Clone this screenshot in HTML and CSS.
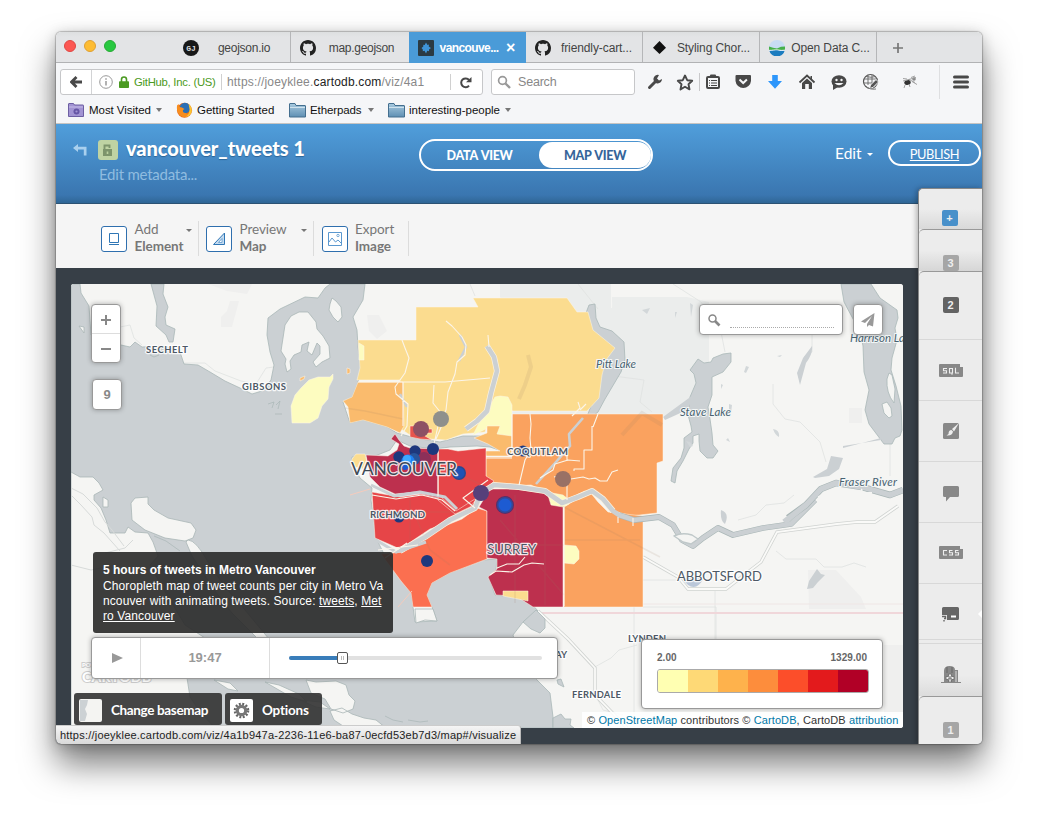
FILE: index.html
```html
<!DOCTYPE html>
<html lang="en">
<head>
<meta charset="utf-8">
<title>vancouver_tweets 1</title>
<link rel="stylesheet" href="styles.css">
</head>
<body>
<div class="window">
  <div class="tabbar">
    <div class="lights"><i class="red"></i><i class="amber"></i><i class="green"></i></div>
    <div class="tab first"><svg width="16" height="16" viewBox="0 0 16 16"><circle cx="8" cy="8" r="8" fill="#181818"/><text x="8" y="11" text-anchor="middle" class="gj">GJ</text></svg><span>geojson.io</span></div>
    <div class="tab"><svg width="16" height="16" viewBox="0 0 16 16"><use href="#octo"/></svg><span>map.geojson</span></div>
    <div class="tab active"><svg width="16" height="16" viewBox="0 0 16 16"><rect width="16" height="16" rx="1" fill="#2b3a42"/><path d="M8 2.500l1.500 2.500 1.500-.5-.3 2L13 8l-2 1.500v1.700l-1.700-.4L8 13.500l-1.500-2.700-1.700.4V9.500L3.500 8l1.800-1.500V4.800l1.400.3z" fill="#3f94d6"/></svg><span>vancouve...</span><b>×</b></div>
    <div class="tab"><svg width="16" height="16" viewBox="0 0 16 16"><use href="#octo"/></svg><span>friendly-cart...</span></div>
    <div class="tab"><svg width="16" height="16" viewBox="0 0 16 16"><path d="M7.500 1l6.500 6.800-6.500 6.200L1 7.800z" fill="#111"/></svg><span>Styling Chor...</span></div>
    <div class="tab"><svg width="16" height="16" viewBox="0 0 16 16"><circle cx="8" cy="8" r="8" fill="#c8dcf4"/><path d="M0 6.500l4 1.200 4 .8 4-1.800 4-.2V10H0z" fill="#46b04a"/><path d="M.3 10.500c3 .5 6-1 9-.2 3 .7 4 .7 6.400.2a8 8 0 0 1-15.400 0z" fill="#1b7cbf"/><path d="M0 10.300c3 .4 6-1 9-.4 3 .6 4 .6 7 .2" fill="none" stroke="#fff" stroke-width=".8"/></svg><span>Open Data C...</span></div>
    <div class="newtab"><svg width="12" height="12" viewBox="0 0 12 12"><path d="M6 1v10M1 6h10" stroke="#777" stroke-width="1.700"/></svg></div>
  </div>

  <div class="navbar">
    <div class="urlbox">
      <div class="back"><svg width="12" height="12" viewBox="0 0 12 12"><path d="M6.500 1L1.500 6l5 5M2 6h10" fill="none" stroke="#484848" stroke-width="2.800"/></svg></div>
      <svg width="14" height="14" viewBox="0 0 14 14"><circle cx="7" cy="7" r="6.300" fill="none" stroke="#999"/><path d="M7 6v4.500M7 3.200v1.500" stroke="#888" stroke-width="1.300"/></svg>
      <svg class="lock" width="10" height="12" viewBox="0 0 10 12"><path d="M2.500 6V3.500a2.500 2.500 0 0 1 5 0V6" fill="none" stroke="#4b9a22" stroke-width="1.600"/><rect y="5.300" width="10" height="6.700" rx=".8" fill="#4b9a22"/></svg>
      <span class="ident">GitHub, Inc. (US)</span>
      <span class="url">https://joeyklee.<em>cartodb.com</em>/viz/4a1</span>
      <div class="reload"><svg width="12" height="13" viewBox="0 0 12 13"><path d="M9 9.600A4.400 4.400 0 1 1 9 4" fill="none" stroke="#484848" stroke-width="2"/><path d="M11.500 1v5.200H6z" fill="#484848"/></svg></div>
    </div>
    <div class="search"><svg width="15" height="15" viewBox="0 0 15 15"><circle cx="5.500" cy="5.500" r="3.900" fill="none" stroke="#999" stroke-width="1.700"/><path d="M8.500 8.500l4.500 4.500" stroke="#999" stroke-width="2.400"/></svg><span>Search</span></div>
    <svg class="tools" width="347" height="40" viewBox="635 62 347 40">
      <path d="M649.500 87.500l7-7" stroke="#4a4a4a" stroke-width="3" stroke-linecap="round"/><path d="M659 75a4.300 4.300 0 1 0 3 4l-3 1.500-2-2z" fill="#4a4a4a"/>
      <path d="M685 75.500l2.200 4.700 5 .6-3.700 3.500 1 5.100-4.500-2.600-4.500 2.600 1-5.100-3.700-3.500 5-.6z" fill="none" stroke="#484848" stroke-width="1.900" stroke-linejoin="round"/>
      <path d="M699.500 73v18" stroke="#c8c8ca"/>
      <rect x="707" y="77" width="12" height="11" rx="1" fill="none" stroke="#484848" stroke-width="2"/><rect x="710" y="74.500" width="6" height="3" rx="1" fill="#484848"/><path d="M709 80.500h1M711 80.500h6M709 83h1M711 83h6M709 85.500h1M711 85.500h6" stroke="#484848" stroke-width="1.200"/>
      <path d="M736.500 75h13.500q1 0 1 1v5a7.800 8 0 0 1-15.500 0v-5q0-1 1-1z" fill="#484848"/><path d="M739.500 79.500l3.700 3.500 3.700-3.500" fill="none" stroke="#f5f6f8" stroke-width="2"/>
      <path d="M772.200 75h5.600v6h4.200l-7 7.800-7-7.800h4.200z" fill="#2d96fb"/>
      <path d="M799.500 82.500l7.500-7 7.500 7" fill="none" stroke="#484848" stroke-width="1.800"/><path d="M802 83l5-4.600 5 4.600v6h-3.200v-5h-3.600v5H802zM810.500 76h1.500v3h-1.500z" fill="#484848"/>
      <ellipse cx="839" cy="81.500" rx="7.500" ry="6.200" fill="#484848"/><path d="M833 84v6l5-3z" fill="#484848"/><circle cx="836.500" cy="80" r="1.200" fill="#f5f6f8"/><circle cx="841.500" cy="80" r="1.200" fill="#f5f6f8"/><path d="M834.500 83q4.500 4.500 9 0z" fill="#f5f6f8"/>
      <circle cx="870.500" cy="81.500" r="7" fill="none" stroke="#555" stroke-width="1.200"/><path d="M864 79h13.500M864 83h9M868 75v10M872 75v9M866 76.500q5 1.500 10 0" stroke="#666" stroke-width=".9" fill="none"/><path d="M869.500 88.500l1-3.500 5.500-5.500 2.500 2.500-5.500 5.500z" fill="#555" stroke="#f5f6f8"/><path d="M866 86q3 4 10 3" stroke="#777" fill="none"/>
      <ellipse cx="907.500" cy="82.500" rx="3.300" ry="2.400" fill="#333" transform="rotate(-15 907.500 82.500)"/><circle cx="914" cy="79" r="1.800" fill="#888"/><path d="M903 81l13-3.500M905 85l-1 3M909 84l1 3M912 81.500l5 3M909 79.500l6 3M907 79l-4-.5M911 77.500l4-1.500" stroke="#999" stroke-width=".9"/>
      <path d="M939.500 65v34" stroke="#dedfe1"/>
      <path d="M954.500 77h13M954.500 82h13M954.500 87h13" stroke="#484848" stroke-width="3" stroke-linecap="round"/>
    </svg>
  </div>

  <div class="bookmarks">
    <svg width="16" height="14" viewBox="0 0 16 14"><path d="M.5 13.500V1q0-.5.500-.5h4.500l1 1.500H15q.5 0 .5.500v11z" fill="#a294d3" stroke="#6d5fa3"/><path d="M1 4h14" stroke="#c6bce8"/><circle cx="8.500" cy="8.500" r="3" fill="#6656a5"/><circle cx="8.500" cy="8.500" r="1.100" fill="#a294d3"/></svg>
    <span class="b1">Most Visited</span><i class="arr"></i>
    <svg class="fox" width="17" height="16" viewBox="0 0 17 16"><circle cx="8.500" cy="8.200" r="7.500" fill="#e66b1a"/><circle cx="9" cy="6" r="5.300" fill="#2a6fb5"/><path d="M1 3.500c-1 8 4 12.500 9 11.500 3-.5 4.500-3 4.500-5-1.500 2-4 2-5 1-2 0-3-1-2.500-3l1.500-1L6 5.500 3.500 5 2.500 2z" fill="#f78d1e"/><path d="M12.500 1.500q5 5 2.500 10-2 3-5 3.500 4-4 3.500-8z" fill="#fbc531"/></svg>
    <span class="b2">Getting Started</span>
    <svg class="fold" width="17" height="15" viewBox="0 0 17 15"><use href="#folder"/></svg>
    <span class="b3">Etherpads</span><i class="arr"></i>
    <svg class="fold2" width="17" height="15" viewBox="0 0 17 15"><use href="#folder"/></svg>
    <span class="b4">interesting-people</span><i class="arr"></i>
  </div>

  <header class="header">
    <svg class="backicon" width="16" height="14" viewBox="0 0 16 14"><path d="M0 5l5-4v2.800h8.500v8.700h-2.700V6.500H5V9z" fill="#a9d0ee"/></svg>
    <div class="privacy"><svg width="10" height="13" viewBox="0 0 10 13"><path d="M1.500 5V1.500h5V4" fill="none" stroke="#7d946b" stroke-width="1.900"/><path d="M0 5h9v7H0z" fill="#7d946b"/><path d="M4.500 7.500V10" stroke="#bcd2a0" stroke-width="1.600"/></svg></div>
    <div class="titles"><h1>vancouver_tweets 1</h1><p>Edit metadata...</p></div>
    <div class="toggle"><span>DATA VIEW</span><span class="on">MAP VIEW</span></div>
    <div class="edit">Edit <i class="caret"></i></div>
    <a class="publish">PUBLISH</a>
  </header>

  <div class="actions">
    <div class="action a1"><div class="ic"><svg width="26" height="26" viewBox="0 0 26 26"><path d="M8.500 7.500h9v9h-9zM8 18.500h10" fill="none" stroke="#2f76b5"/></svg></div><div>Add<br><b>Element</b></div><i class="caret"></i></div>
    <div class="action a2"><div class="ic"><svg width="26" height="26" viewBox="0 0 26 26"><path d="M7.500 18.500L18.500 7v11.500z" fill="#c5dbef" stroke="#2f76b5"/><path d="M12.500 16.500l3.500-4v4z" fill="#fff" stroke="#5b98cf" stroke-width=".8"/></svg></div><div>Preview<br><b>Map</b></div><i class="caret"></i></div>
    <div class="action a3"><div class="ic"><svg width="26" height="26" viewBox="0 0 26 26"><path d="M6.500 6.500h13v13h-13zM7 16l3-4 3.500 4 2.500-2 3 3" fill="none" stroke="#5b98cf"/><circle cx="16" cy="9.500" r="1.200" fill="none" stroke="#5b98cf" stroke-width=".8"/></svg></div><div>Export<br><b>Image</b></div></div>
  </div>

  <main class="stage">
    <div class="map">
      <svg class="basemap" width="832" height="444" viewBox="71 284 832 444">
        <rect x="71" y="284" width="832" height="444" fill="#f5f5f3"/>
        <g fill="#ebedec">
          <path d="M500 284h111v24h20v18h-12v16h14v45h30v27H512V320L500 297zM612 297h75l22 5v73l-12 20-34 22-50-3z"/>
          <path d="M230 301h9l-7 26h-11v-10l6-6zM208 284h44l-5 10-20-3zM808 570h28l25 27 5 12h-57zM884 645h19v69h-19zM849 408h13v15h-13zM367 315h12l8 16-10 8-8-8z" fill="#efefee"/>
        </g>
        <g fill="none" stroke="#e0e2e1" stroke-width=".8">
          <path d="M120 327l10-2 4 13 8 7M183 363h22l10 8 26 10 15 3 10-16 8-1M470 284l5 12M578 284l20 25M673 284l28 18 20 30 4 20M812 330v22l-8 5M773 384v20l12 15 15 3 20 20 6 20M606 375l38 5-4 22 12 10M738 520l18-5 10-10 18-2 10-8M776 551l10 8h30l8 8h18l12-4 12 4M642 580h60M643 607l73 0v34l-17 4v30M715 591v50M890 440v36"/>
          <path d="M634 593v135M593 668l18-10 8-8 18-5M593 690l10 20 20 5"/>
        </g>
        <path d="M500 604h403" stroke="#efe6e5"/><path d="M540 613h363" stroke="#f0d7da" stroke-width="2"/>
        <g fill="none" stroke="#d0d3d1" stroke-width="3.400"><path d="M538 611l30 28 27 29v27l32 33M643 557l35 20 10 12h38l35-27 16-30 60-8 20-2h18l23-16"/></g>
        <g fill="none" stroke="#fafaf8" stroke-width="1.800"><path d="M538 611l30 28 27 29v27l32 33M643 557l35 20 10 12h38l35-27 16-30 60-8 20-2h18l23-16"/></g>

        <g fill="#cbd0d3" stroke="#aab8b8" stroke-width=".8">
          <path d="M71 284L80 284 81 293 89 306 91 335 116 341 121 345 130 347 135 342 142 347 165 346 180 352 184 364 198 365 210 372 225 381 240 388 252 394 262 391 271 380 274 365 270 352 267 335 268 318 280 309 305 297 318 298 325 288 330 284 365 284 363 300 353 317 357 330 358 347 361 370 358 382 352 397 343 402 350 423 363 420 387 427 397 433 415 438 440 442 463 436 480 436 490 440 505 452 490 447 477 446 450 447 435 449 410 446 397 440 390 450 375 456 352 457 352 463 360 478 372 488 371 500 374 520 377 540 383 552 393 570 403 582 411 593 413 607 415 622 437 621 432 607 427 595 432 583 450 573 483 560 497 559 496 570 489 578 495 595 517 597 530 602 538 611 523 622 513 635 520 660 537 680 550 693 553 717 553 728 71 728Z"/>
          <path d="M151 284h13l-1 10 5 13-3 10 1 8 9 4-2 13-4 0-3-7-10-9 1-20z"/>
          <path d="M589 305l6-1 1 14 4 9 12 4 12 11 1 18-4 12-16 27-7 13-10 8-12 13-8 14-2 10 7 6-5 8-15 18-12 8 8-16 20-24-3-14 20-24 7-18 4-17 2-20 9-12-6-10-13-9-6-14 3-6z"/>
          <path d="M698 359l6 4 7-1 2-4 10-4 8-1 0 9-8 10-11 5 0 18-4 12 2 12 2 14 1 12 5 6-5 7-6 0-7-7-1-10 0-7-6 2 0 7-4 6-6 12-6 10-2 12-4-2 2-13 8-10 3-10 0-10 8-6-1-6-3-11 2-18 6-14-2-9-4-4z"/>
          <path d="M841 284h30l9 14 17 12 1 8-3 10 2 12-5 18-1 12 5 16 5 20 1 24-2 6-5 2-3 6h-8l-6-8-9-12-4-14 4-20-5-18-1-26-3-14-16-30z"/>
          <path d="M889 373l3 2 3 14-1 14q-8-10-7-24zM882 404l5-2 4 6 1 8-3 2-5-5z" fill="#f5f5f3"/>
          <path d="M812 346q1 8-6 17l-6 22-3-12 6-15zM813 477l14-8 4-13 12 2-4 11-10 7-14 2zM843 448l38-10v2l-38 6zM817 569l4 5 4 1-7 7-5 6-6 1 2-8zM663 417l26-19 6-4-8 16-22 10zM721 510q9 3 4 14-5-3-4-14z" stroke="none"/>
          <path d="M523 622l13-12 9 9 0 9-5 5-9-4zM557 680l4-1 3 8-6-3z"/>
        </g>
        <g fill="#f5f5f3" stroke="#a9b6b6" stroke-width=".8">
          <path d="M71 472L80 477 93 477 99 483 103 490 94 495 94 500 101 508 106 520 110 533 125 533 128 527 135 532 148 533 153 542 158 556 150 565 160 583 170 600 185 625 205 638 212 652 205 665 187 678 190 697 200 712 215 728 71 728Z"/>
          <path d="M131 503l4-5 13-1 0 7 6 6 14 8 23 5 5 7-3 8-8 3-20-3-20-8-13-10z"/>
          <path d="M188 540q8 0 20 22 18 28 32 42l29 35-12-1-25-25-17-22-23-35-6-14z"/>
          <path d="M285 325l6-9 8-4 9 0 8 10 1 7 6 7 6 10 1 12-8 4-6 5-3-5 7-8 0-8-3-3-5 12-5-4 2-9-7 3-1 7-7 3-4 6 1 8-4 3-2-8 1-5-5-8zM332 298l4 3 5 6 1 10-4 5-5-5-4-7 1-6zM79 326l5 1 0 6z"/>
          <path d="M306 680l10 2 20-1 10 4 3 10 6 6-2 8-10 4-12-4-6-10-14-6zM330 711l12-3 10 6 12 4 12 2 10 8h-40l-12-8zM300 700l20 2 10 7-14-2zM265 682l14 3 20 9 8 8-16-5zM214 680l16 3 8 8-10-2z"/>
          <path d="M103 497l5 3 0 7-5 0zM415 609h18l4 12-12-1-9 3z"/>
        </g>
        <g fill="none" stroke="#d7dad9"><path d="M71 488l12 6 14 14 8 14 7 8 12 16M71 495l10 10 11 12 2 8 10 8 16 18M105 553l20-5 8-8M71 565l20 5 20-4"/></g>
        <g fill="none" stroke="#a9b6b6" stroke-width=".7"><path d="M154 536l12 5 14 10M150 355l4 2 5-2M268 404l6-2-2 6M276 405l4-4-2 8M275 414l7 0M408 720l12 2 8-1M385 716l8 4 10 2"/></g>
        <path d="M553 718l8-4 4 5 6 0-1 6 4 3h-21z" fill="#cbd0d3" stroke="#aab8b8" stroke-width=".8"/>
        <g fill="#d2d7d9"><path d="M686 441l4 1 3 4-3 1zM746 366l3 1-3 6-2-1zM721 384l2 1-2 4zM729 404l3 1-1 8-2-2zM777 356l5-1-2 2zM773 429q7 1 6 8-4-2-6-8M690 303l3 2-2 12M675 312l2 0-2 6M726 440l2-2 2 4zM642 310l8-2-3 6z"/></g>

        <g stroke="#fdf6e8" stroke-width=".5">
          <path fill="#fbdc8f" d="M358 340h58v-33h62l-5-9h94l10 14h11l5 18 22 18-9 12-4 15-3 23-12 13h-75l-5-12-12 0-10 33-22 2-17 6-16-1-17-2-12-8-1-49h-43l3-12z"/>
          <path fill="#fabb6d" d="M358 382h45l1 44-4 7-13-6-24-7-13 3-2-16-5-6 9-4z"/>
          <path fill="#fdfcc0" d="M495 397l5-1 8 1 4 8v35l-5 2-7-4-8 0-4-10-15 7 5-10 10-16z"/>
          <path fill="#fabb6d" d="M474 438l13-5v-7h13l-3 8 15 2v20h-26l-1-5h15l-12-7z"/>
          <path fill="#faa25f" d="M512 414h151v47l-6 2v50l-26 3-23-7-10-14-13-4-17 8-23-8-14-6-45 2V457h26z"/>
          <path fill="#e64548" d="M438 449l10 0 10 2 28-3v28l8 5-14 14-10 12-15 7-17-14zM372 492l28 5 22-3 19 3 15 14 22-14-3 9-20 14-25 9-30 20-25-11z"/>
          <path fill="#bd304e" d="M366 455l22 1 9-6 2-6-8-5 4-5 4 6 5 6 6 2 28 1v49l-23-6-20 2-15-7-10-10z"/>
          <path fill="#fb6f50" d="M477 508l10 3v48l-37 14-18 10-5 12 5 12h-19l-2-14-10-12-20-27 22-2 27-20 32-13z"/>
          <path fill="#bd304e" d="M487 511l-8-4 11-18h25l30 4 9 10 9 2v102h-30l-17-11-20-1-8-18 9-8 0-10-10-1z"/>
          <path fill="#faa25f" d="M564 507l13-8 13-7 8 10 10 10 35 4v91h-79z"/>
          <path fill="#fbdc8f" d="M503 591h25v10l-25-5zM352 459l4-5 9 0 2 8-4 7-12-3z"/>
          <path fill="#fdfcc0" d="M547 492l16 3 5 4 1 5-6 3-12-2zM564 545l12 1 3 5v8l-5 5-10-1zM291 406l4-11 6-7 8-8 9-3 12 0 3-3 0 5-4 8-1 12-6 7-4 12-8 5-18 0z"/>
          <path fill="#e6554d" d="M410 426h15v3h7v4h-7v3l7 4-12-1-10-2z"/><path fill="#fabb6d" d="M300 378l5-2-1 3-4 2zM347 368l3 1 0 4-3 1z"/><path fill="#fdfcc0" d="M359 343l5 3v14h-5z"/>
        </g>
        <g fill="none" stroke="#9a7a68" stroke-opacity=".13" stroke-width="1.600"><path d="M372 512h100M410 500v45M415 515l15 35 20 15M487 545h77M515 495v108M545 510v95M560 505l100 52M565 540h75M450 470l30 14M500 520l64 75M345 408l20 3 38 8"/><path d="M528 355l3 12-6 18-6 14M622 435l20-22 20 12" stroke-width="4"/></g>
        <g fill="none" stroke-linejoin="round">
          <path stroke="#fbf1de" stroke-width="6" d="M487 346l7 11 3 14-6 22-4 18-10 10-11 8M400 551l25-14 25-17 25-12 6-15 13-8 25 2 26 4 17 12 16-6 14-6 11 8 10 12"/>
          <path stroke="#a9b6b6" stroke-width="5.800" d="M619 515l15 5 25-3 14 8 9 15 11 6 10-8 15-10 15 7 30-7 28-4 24-24"/>
          <g stroke="#cbd0d3" stroke-width="4.600">
            <path d="M487 346l7 11 3 14-6 22-4 18-10 10-11 8"/>
            <path d="M400 551l25-14 25-17 25-12 6-15 13-8 25 2 26 4 17 12 16-6 14-6 11 8 10 12 6 4 15 5 25-3 14 8 9 15 11 6 10-8 15-10 15 7 30-7 28-4 24-24"/>
            <path d="M376 540l20 12 30-10M371 485l23 11 26-4 25 5 12 12" stroke-width="3"/>
            <path d="M400 394l7 13M583 418l-14 16 1 12-14 16-20 22M460 335l6 12-7 14" stroke-width="2.600"/>
          </g>
          <path d="M788 518l18-13 15-16 15-6 26 4 28 8 13-5" stroke="#a9b6b6" stroke-width="6.600"/><path d="M784 522l22-17 15-16 15-6 26 4 28 8 13-5" stroke="#cbd0d3" stroke-width="5.400"/>
          <path d="M862 489q-3 4 10 4M818 497l10-4" stroke="#f5f5f3" stroke-width="1.800"/>
          <path d="M674 536q8-4 18-1l6 4-7 5-8-2z" fill="#f5f5f3" stroke="#bfc8c9" stroke-width="1.400"/>
        </g>
        <g fill="none" stroke="#fbf5e9" stroke-width="1.100" stroke-linejoin="round">
          <path d="M402 340l3 8 4 10-4 15-10 14 1 7 12 10-1 22-6 10M446 321l6 5 10 11 4 8-1 10-8 7-2 12-7 18-2 18-8 16-4 18M434 385l-1 18 8 10 1 12-6 14M488 335l1 12M530 414l1 10-1 14 1 12-6 10-6 25M540 478l13-8 2-6 13-4 12 1M554 477l10-3 7 5 12-2 6 2 6-1 5 3 7 0 5-9 6-2M567 461v-7M497 568l10-4 12 0 6-7M490 575l6-4 16 1 12-7 8-2 12 1M403 382v44M358 382l87 0 45-4M438 449v47M512 414v40M564 507v99M486 458h26M592 426v24h-8v19h-10v2M598 414l-5 13M475 508l-12-10 25-18M378 550l40-5M385 558l22-15M567 483v17M618 517v6M633 518v8M572 416l8-8-2-6M580 410l6-6M372 495l24 4 26-4 20 5 13 11"/>
        </g>
        <path d="M682 578q12 18 22 0z" fill="#bac7d9"/>
        <path d="M350 495l20-6M398 607l14-16" stroke="#f5cbbc"/>

        <g>
          <circle cx="421" cy="429" r="8" fill="#8d5164"/><circle cx="441" cy="419" r="8" fill="#8f908c"/>
          <circle cx="481" cy="493" r="8" fill="#57407a"/><circle cx="563" cy="479" r="8" fill="#997165"/>
          <circle cx="424" cy="459" r="7" fill="#8c3059"/>
          <g fill="#1e387d"><circle cx="399" cy="457" r="5.700"/><circle cx="415" cy="451" r="5.700"/><circle cx="433" cy="449" r="6"/><circle cx="523" cy="451" r="5.500"/><circle cx="399" cy="517" r="5.500"/><circle cx="427" cy="561" r="6"/></g>
          <circle cx="414" cy="459" r="6" fill="#28559b"/><circle cx="408" cy="461" r="6.500" fill="#1f7ff2"/><circle cx="407" cy="459" r="4" fill="#3ba8ff"/><circle cx="405" cy="467" r="3" fill="#1d5bd2"/>
          <circle cx="505" cy="505" r="9" fill="#5b2e68"/><circle cx="505" cy="505" r="8" fill="#324a9a"/><circle cx="505" cy="505" r="6.500" fill="#1d5bd2"/>
          <circle cx="459" cy="473" r="7" fill="#2b4790"/><circle cx="459" cy="473" r="5.500" fill="#2053b5"/>
        </g>

        <g class="city">
          <text x="146" y="352.500" textLength="42">SECHELT</text>
          <text x="242" y="390" textLength="44">GIBSONS</text>
          <text x="507" y="455" textLength="61" class="c3">COQUITLAM</text>
          <text x="370" y="518" textLength="55" class="c3">RICHMOND</text>
          <text x="351" y="475" textLength="106" class="c1">VANCOUVER</text>
          <text x="487" y="553.500" textLength="49" class="c2">SURREY</text>
          <text x="677" y="580.500" textLength="85" class="c2">ABBOTSFORD</text>
          <text x="628" y="642" textLength="38">LYNDEN</text>
          <text x="572" y="698" textLength="49">FERNDALE</text>
          <text x="555" y="658">AY</text>
        </g>
        <g class="lake">
          <text x="596" y="368" textLength="40">Pitt Lake</text>
          <text x="680" y="416" textLength="51">Stave Lake</text>
          <text x="839" y="485.500" textLength="58">Fraser River</text>
          <text x="850" y="342">Harrison Lake</text>
        </g>
        <g class="logo"><text x="82" y="667" class="pw">POWERED BY</text><text x="82" y="682" textLength="69">CARTODB</text></g>
      </svg>

      <div class="zoom"><span><svg width="10" height="10"><path d="M5 0v10M0 5h10" stroke="#888" stroke-width="2"/></svg></span><span><svg width="10" height="10"><path d="M0 5h10" stroke="#888" stroke-width="2"/></svg></span></div>
      <div class="level">9</div>
      <div class="geosearch"><svg width="13" height="13" viewBox="0 0 13 13"><circle cx="4.500" cy="4.500" r="3.500" fill="none" stroke="#888" stroke-width="1.500"/><path d="M7 7l4.500 4.500" stroke="#888" stroke-width="2.600"/></svg><i></i></div>
      <div class="share"><svg width="14" height="14" viewBox="0 0 14 14"><path d="M13.500 0L0 8.500l4 1.500 7-7-5 8v3l2-2 4 1.500z" fill="#999"/></svg></div>

      <div class="note"><strong>5 hours of tweets in Metro Vancouver</strong><p>Choropleth map of tweet counts per city in Metro Va<br>ncouver with animating tweets. Source: <u>tweets</u>, <u>Met</u><br><u>ro Vancouver</u></p></div>

      <div class="timeline"><div class="play"><i></i></div><div class="time">19:47</div><div class="track"><div class="rail"><div class="done"></div><div class="knob"></div></div></div></div>

      <div class="legend"><div class="nums"><span>2.00</span><span>1329.00</span></div><div class="ramp"><i class="r1"></i><i class="r2"></i><i class="r3"></i><i class="r4"></i><i class="r5"></i><i class="r6"></i><i class="r7"></i></div></div>

      <div class="attrib">© <a>OpenStreetMap</a> contributors © <a>CartoDB</a>, CartoDB <a>attribution</a></div>

      <div class="mapbtns">
        <div class="mbtn m1"><svg width="23" height="23" viewBox="0 0 23 23"><rect width="23" height="23" rx="2" fill="#f4f4f2"/><path d="M1 1h8l-1 5-2 4 2 5-2 7H1z" fill="#ccd1d4"/></svg><span>Change basemap</span></div>
        <div class="mbtn m2"><svg width="23" height="23" viewBox="0 0 23 23"><rect width="23" height="23" rx="2" fill="#fff"/><circle cx="11.500" cy="11.500" r="6.500" fill="none" stroke="#666" stroke-width="2.600" stroke-dasharray="1.900 1.500"/><circle cx="11.500" cy="11.500" r="4.200" fill="none" stroke="#777" stroke-width="3.200"/></svg><span>Options</span></div>
      </div>
    </div>
  </main>

  <aside class="panel">
    <div class="p tabtop t1"><span class="sq blue">+</span></div>
    <div class="p tabtop t2"><span class="sq grey">3</span></div>
    <div class="p tabtop t3"><span class="sq dark">2</span></div>
    <div class="p row"><svg width="24" height="13" viewBox="0 0 24 13"><path d="M0 1q0-1 1-1h20v3h3v9q0 1-1 1H1q-1 0-1-1z" fill="#888"/><path d="M8 4.500H4.500v2.200h3V9H4M10.500 4.500h3V9h-3zM13 9v1.800M16.500 3.800V9H20" fill="none" stroke="#eee" stroke-width="1.100"/></svg></div>
    <div class="p row"><svg width="16" height="16" viewBox="0 0 16 16"><rect width="16" height="16" rx="1.500" fill="#888"/><path d="M16 0l-7 6 2 2.500zM8.500 7q-3 0-3 4l-2 1.500q6 .5 6.500-4z" fill="#eee"/></svg></div>
    <div class="p row chat"><svg width="16" height="16" viewBox="0 0 16 16"><path d="M1.500 0h13q1.500 0 1.500 1.500v8q0 1.500-1.500 1.500H7l-4 4.500v-4.500H1.500Q0 11 0 9.500v-8Q0 0 1.500 0z" fill="#888"/></svg></div>
    <div class="p row css"><svg width="24" height="13" viewBox="0 0 24 13"><path d="M0 1q0-1 1-1h20v3h3v9q0 1-1 1H1q-1 0-1-1z" fill="#888"/><path d="M8 4.500H4.500V9H8M13.500 4.500h-3v2.200h3V9H10M19.500 4.500h-3v2.200h3V9H16" fill="none" stroke="#eee" stroke-width="1.100"/></svg></div>
    <div class="p row legendrow"><svg width="19" height="15" viewBox="0 0 19 15"><path d="M1 1.500Q1 0 2.500 0h14Q18 0 18 1.500v10q0 1.500-1.500 1.500H6V8H1z" fill="#666"/><path d="M10 9.500h5" stroke="#fff" stroke-width="1.800"/><path d="M1 9.500h3.500v2H3M3 13v1.500" fill="none" stroke="#666" stroke-width="1.400"/></svg><i></i></div>
    <div class="p gaprow"></div>
    <div class="p filters"><svg width="20" height="17" viewBox="0 0 20 17"><path d="M3 16V5q0-5 5.500-5T14 4h3v12z" fill="#888"/><path d="M6 1v6M11 1v6" stroke="#666"/><path d="M15 5v11" stroke="#ddd"/><path d="M7.500 8h3v2.500H13v3h-2.500V16h-3v-2.500H5v-3h2.500z" fill="#eee" stroke="#777"/><path d="M9 10v4.500M7 12.200h4" stroke="#777"/><path d="M0 16.500h20" stroke="#888"/></svg></div>
    <div class="p tabtop t4"><span class="sq grey">1</span></div>
  </aside>
  <div class="status">https://joeyklee.cartodb.com/viz/4a1b947a-2236-11e6-ba87-0ecfd53eb7d3/map#/visualize</div>
</div>

<svg class="defs" width="0" height="0">
  <defs>
    <path id="octo" fill="#222" d="M8 0C3.580 0 0 3.580 0 8c0 3.540 2.290 6.530 5.470 7.590.4.070.55-.17.55-.38 0-.19-.01-.82-.01-1.490-2.010.37-2.530-.49-2.690-.94-.09-.23-.48-.94-.82-1.130-.28-.15-.68-.52-.01-.53.63-.01 1.080.58 1.230.82.72 1.210 1.870.87 2.330.66.07-.52.28-.87.51-1.070-1.780-.2-3.640-.89-3.640-3.950 0-.87.31-1.590.82-2.150-.08-.2-.36-1.020.08-2.120 0 0 .67-.21 2.200.82.64-.18 1.320-.27 2-.27s1.360.09 2 .27c1.530-1.040 2.200-.82 2.200-.82.44 1.100.16 1.920.08 2.120.51.56.82 1.270.82 2.150 0 3.070-1.870 3.750-3.650 3.950.29.25.54.73.54 1.480 0 1.070-.01 1.930-.01 2.200 0 .21.15.46.55.38A8.010 8.010 0 0 0 16 8c0-4.420-3.580-8-8-8z"/>
    <linearGradient id="fg" x1="0" y1="0" x2="0" y2="1"><stop offset="0" stop-color="#a9cbe0"/><stop offset="1" stop-color="#5f8fb3"/></linearGradient>
    <g id="folder"><path d="M.5 14V1q0-.5.500-.5h5l1 2h9q.5 0 .5.500v11z" fill="url(#fg)" stroke="#446f8f"/><path d="M1 4.500h15" stroke="#d0e3ee"/></g>
  </defs>
</svg>
</body>
</html>
```

FILE: styles.css
```css
* { box-sizing: border-box; }
html { background: #fff; }
body { margin: 0; min-height: 824px; display: flow-root; font-family: "Liberation Sans", Arial, sans-serif; }
svg { display: block; flex: none; }
.defs { position: absolute; }
.window { position: relative; width: 926px; height: 712px; margin: 32px 56px 0; border-radius: 5px; overflow: hidden; background: #f5f6f8; display: flex; flex-direction: column; box-shadow: 0 0 1px 1px rgba(0,0,0,.22), 0 20px 34px rgba(0,0,0,.52), 0 2px 14px rgba(0,0,0,.2); }

.tabbar { height: 31px; flex: none; display: flex; background: linear-gradient(#dddfe0, #e3e4e6 5px); border-bottom: 1px solid #b1b2b4; border-radius: 5px 5px 0 0; }
.lights { width: 115px; display: flex; gap: 8px; padding: 8px 0 0 8px; }
.lights i { width: 12px; height: 12px; border-radius: 50%; }
.red { background: #fc5753; border: 1px solid #df4744; }
.amber { background: #fdbc33; border: 1px solid #dea034; }
.green { background: #28c840; border: 1px solid #27aa35; }
.tab { width: 117px; display: flex; align-items: center; padding: 1px 0 0 9px; font-size: 12px; color: #444; border-right: 1px solid #b5b6b8; }
.tab.first { width: 120px; padding-left: 12px; }
.tab.first + .tab { width: 118px; border-right: 0; }
.tab span { flex: 1; text-align: center; white-space: nowrap; letter-spacing: -.1px; }
.tab.first span { letter-spacing: -.25px; padding-right: 1px; }
.tab.first + .tab span { padding-right: 2px; letter-spacing: -.3px; }
.tab.active { background: #4a9bd8; color: #fff; border: 0; margin-bottom: -1px; }
.tab.active span { font-weight: bold; letter-spacing: -.6px; padding-left: 2px; }
.tab.active b { width: 24px; font-size: 16px; padding-left: 4px; }
.gj { font: bold 8px "Liberation Mono", monospace; fill: #ddd; }
.newtab { padding: 10px 0 0 15px; }

.navbar { height: 35px; flex: none; display: flex; padding-left: 4px; }
.urlbox { width: 423px; height: 26px; margin-top: 6px; background: #fff; border: 1px solid #c6c7c9; border-radius: 3px; display: flex; align-items: center; font-size: 12px; }
.back { width: 31px; height: 24px; padding: 6px 0 0 9px; border-right: 1px solid #d2d3d5; margin-right: 7px; }
.lock { margin: -1px 5px 0 6px; }
.ident { width: 88px; color: #4b9a22; border-right: 1px solid #d0d0d0; font-size: 11.300px; letter-spacing: -.26px; white-space: nowrap; line-height: 16px; }
.url { width: 229px; padding-left: 5px; color: #888; font-size: 12px; letter-spacing: .18px; border-right: 1px solid #d0d0d0; line-height: 16px; white-space: nowrap; }
.url em { font-style: normal; color: #222; }
.reload { padding-left: 9px; }
.search { width: 144px; height: 26px; margin: 6px 0 0 8px; background: #fff; border: 1px solid #c6c7c9; border-radius: 3px; display: flex; align-items: center; font-size: 12.500px; color: #888; padding-left: 5px; gap: 6px; letter-spacing: -.2px; }
.tools { margin-top: -1px; }

.bookmarks { height: 26px; flex: none; display: flex; align-items: center; padding: 0 0 1px 12px; font-size: 11.500px; color: #111; border-bottom: 1px solid #c6c4c2; white-space: nowrap; }
.arr { border: 3.500px solid transparent; border-top: 4px solid #777; border-bottom: 0; margin-left: 5px; }
.b1 { margin-left: 5px; width: 62px; letter-spacing: -.05px; }
.fox { margin-left: 14px; }
.b2 { margin-left: 4px; width: 77px; letter-spacing: 0; }
.fold { margin-left: 15px; }
.b3 { margin-left: 4px; width: 53px; letter-spacing: -.1px; }
.fold2 { margin-left: 14px; }
.b4 { margin-left: 4px; width: 91px; letter-spacing: -.03px; }

.header { height: 80px; flex: none; display: flex; background: linear-gradient(#509edb, #3a76b0 90%, #2f6695); border-bottom: 1px solid #2c5273; color: #fff; font-family: Lato, sans-serif; }
.backicon { margin: 19px 9px 0 17px; }
.privacy { width: 20px; height: 20px; background: #bfd3a3; border-radius: 3px; margin: 16px 0 0 0; padding: 4px 0 0 5px; }
.titles { width: 321px; height: 79px; margin: 0 -20px 0 0; }
h1 { margin: 9px 0 0 8px; font-size: 20px; line-height: 30px; letter-spacing: -.07px; font-weight: 900; text-shadow: 0 1px 1px #2c6497; }
.titles p { margin: 0 0 0 -19px; font-size: 15px; line-height: 22px; color: #8fbce0; letter-spacing: -.23px; }
.toggle { width: 234px; height: 32px; margin: 15px 0 0 0; border: 2px solid #fff; border-radius: 16px; display: flex; font-size: 12.500px; font-weight: 900; line-height: 29px; letter-spacing: -.3px; word-spacing: 1px; text-align: center; }
.toggle span { width: 117px; }
.toggle .on { width: 112px; height: 26px; margin: 1px 0 0 1px; border-radius: 13px; background: #fff; color: #36659a; line-height: 27px; }
.edit { margin: 18px 0 0 182px; width: 53px; font-size: 15.500px; line-height: 22px; }
.caret { display: inline-block; border: 3px solid transparent; border-top: 3px solid #fff; border-bottom: 0; vertical-align: 3px; margin-left: 1px; }
.publish { width: 93px; height: 26px; margin-top: 16px; border: 2px solid #fff; border-radius: 13px; font-size: 12.800px; line-height: 24px; text-align: center; text-decoration: underline; letter-spacing: -.4px; }

.actions { height: 64px; flex: none; background: #f5f5f5; display: flex; padding: 17px 0 0 45px; font: 13.500px/17px Lato, sans-serif; letter-spacing: -.05px; color: #777; }
.action { height: 35px; display: flex; border-right: 1px solid #dcdcdc; position: relative; }
.a1 { width: 98px; }
.a2 { width: 115px; padding-left: 7px; }
.a3 { width: 95px; padding-left: 8px; }
.ic { width: 26px; height: 26px; margin: 5px 7.500px 0 0; border: 1px solid #2f6fae; border-radius: 3px; background: #fff; }
.a3 .ic { margin-right: 7px; }
.ic svg { margin: -1px; }
.action .caret { position: absolute; right: 6px; top: 8px; border-top-color: #777; }

.stage { height: 476px; flex: none; background: #373f47; padding: 16px 15px; }
.map { position: relative; width: 832px; height: 444px; border-radius: 3px; overflow: hidden; background: #f5f5f3; }
.city { font: 700 9.500px Lato, sans-serif; fill: #4d5966; stroke: #fff; stroke-width: 2.500px; stroke-opacity: .85; paint-order: stroke; }
.city text { stroke-linejoin: round; }
.city .c3 { font-size: 10px; }
.city .c1 { font-size: 17.500px; font-weight: 400; fill: #3e4a55; }
.city .c2 { font-size: 13px; font-weight: 400; }
.lake { font: italic 11.500px Lato, sans-serif; fill: #486270; stroke: #f3f6f6; stroke-width: 2px; paint-order: stroke; }
.logo { font: 900 14px Lato, sans-serif; fill: #fff; stroke: #ccc; stroke-width: 2px; paint-order: stroke; }
.pw { font-size: 6px; }
.zoom, .level, .geosearch, .share, .timeline, .legend { position: absolute; background: #fff; border: 1px solid #999; border-radius: 4px; box-shadow: 0 0 5px rgba(0,0,0,.3); }
.zoom { left: 20px; top: 20px; width: 30px; height: 59px; }
.zoom span { display: flex; height: 29px; align-items: center; justify-content: center; border-bottom: 1px solid #ddd; padding-top: 2px; }
.zoom span + span { border: 0; height: 28px; }
.level { left: 21px; top: 95px; width: 30px; height: 31px; text-align: center; font: bold 13px/30px "Liberation Sans", sans-serif; color: #888; }
.geosearch { left: 628px; top: 20px; width: 144px; height: 31px; padding: 9px 8px; display: flex; gap: 9px; }
.geosearch i { width: 104px; height: 14px; border-bottom: 1px dotted #aaa; }
.share { left: 782px; top: 20px; width: 30px; height: 31px; padding: 8px 0 0 7px; }
.note { position: absolute; left: 22px; top: 268px; width: 300px; height: 81px; border-radius: 3px; background: rgba(45,45,45,.92); color: #fff; padding: 11px 10px; font-size: 12px; line-height: 15px; white-space: nowrap; }
.note strong { display: block; letter-spacing: 0; line-height: 14px; }
.note p { margin: 2px 0 0; letter-spacing: .1px; }
.timeline { left: 20px; top: 353px; width: 467px; height: 42px; display: flex; }
.play { width: 49px; border-right: 1px solid #ddd; padding: 15px 0 0 20px; }
.play i { display: block; width: 0; border: 5px solid transparent; border-left: 11px solid #999; border-right: 0; }
.time { width: 129px; border-right: 1px solid #ddd; text-align: center; font-weight: bold; font-size: 13px; line-height: 40px; color: #999; }
.track { padding: 18px 0 0 19px; }
.rail { position: relative; width: 253px; height: 4px; background: #e1e1e1; border-radius: 2px; }
.done { width: 50px; height: 4px; border-radius: 2px; background: #397dba; }
.knob { position: absolute; left: 48px; top: -4px; width: 11px; height: 12px; border: 1px solid #555; border-radius: 2px; background: linear-gradient(#bbb, #bbb) 3px 3px / 1px 4px no-repeat, linear-gradient(#bbb, #bbb) 5px 3px / 1px 4px no-repeat, #fff; }
.legend { left: 570px; top: 355px; width: 242px; height: 70px; padding: 12px 14px 0 15px; }
.nums { display: flex; justify-content: space-between; font-weight: bold; font-size: 10px; line-height: 12px; color: #666; letter-spacing: .05px; padding-right: 1px; }
.ramp { display: flex; height: 24px; width: 212px; margin-top: 5px; border: 1px solid #aaa; border-radius: 3px; overflow: hidden; }
.ramp i { flex: 1; }
.r1 { background: #ffffb2; }
.r2 { background: #fed976; }
.r3 { background: #feb24c; }
.r4 { background: #fd8d3c; }
.r5 { background: #fc4e2a; }
.r6 { background: #e31a1c; }
.r7 { background: #b10026; }
.attrib { position: absolute; right: 0; bottom: 0; width: 321px; height: 16px; background: rgba(255,255,255,.85); font-size: 11px; line-height: 17px; color: #333; padding-left: 5px; letter-spacing: .1px; white-space: nowrap; }
.attrib a { color: #0078a8; }
.mapbtns { position: absolute; left: 3px; top: 409px; display: flex; gap: 3px; }
.mbtn { height: 32px; border-radius: 3px; background: rgba(50,50,50,.9); color: #fff; font: bold 13.500px Lato, sans-serif; letter-spacing: -.35px; display: flex; align-items: center; gap: 9px; padding: 2px 0 0 5px; white-space: nowrap; }
.m1 { width: 148px; }
.m2 { width: 97px; letter-spacing: -.2px; }

.panel { position: absolute; left: 862px; top: 156px; width: 64px; height: 556px; background: #ececec; border-left: 1px solid #888; border-top: 1px solid #888; border-radius: 5px 0 0 0; box-shadow: -2px 0 5px rgba(0,0,0,.25); display: flex; flex-direction: column; }
.p { display: flex; justify-content: center; align-items: center; flex: none; background: #ececec; }
.sq { width: 16px; height: 16px; border-radius: 2px; font: bold 11px/16px "Liberation Sans", sans-serif; text-align: center; color: #eee; }
.blue { background: #4890ca; margin-left: -2px; }
.grey { background: #a6a6a6; }
.dark { background: #636363; }
.tabtop { border-radius: 5px 0 0 0; border-top: 1px solid #999; }
.t1 { height: 40px; border-top: 0; padding-top: 18px; background: linear-gradient(#ececec 50%, #d9d9d9); }
.t2 { height: 42px; padding-top: 24px; background: linear-gradient(#ececec 50%, #d6d6d6); }
.t3 { height: 68px; padding-bottom: 2px; }
.row { height: 61px; border-top: 1px solid #d8d8d8; }
.chat { padding-top: 3px; }
.css { padding-bottom: 2px; }
.legendrow { height: 56px; position: relative; padding-top: 6px; }
.legendrow i { position: absolute; right: 0; top: 26px; border: 4px solid transparent; border-right: 4px solid #fff; border-left: 0; }
.gaprow { height: 5px; border-top: 1px solid #d8d8d8; border-bottom: 1px solid #d8d8d8; }
.filters { height: 52px; padding-top: 9px; background: linear-gradient(#ececec 60%, #dcdcdc); }
.t4 { height: 48px; padding-top: 18px; }
.status { position: absolute; left: 0; bottom: 0; width: 465px; height: 19px; background: linear-gradient(#f5f5f5, #d9d9d9); border-top: 1px solid #ccc; border-right: 1px solid #bbb; font-size: 11px; line-height: 19px; letter-spacing: .215px; padding-left: 4px; color: #222; white-space: nowrap; border-radius: 0 3px 0 5px; }
```
